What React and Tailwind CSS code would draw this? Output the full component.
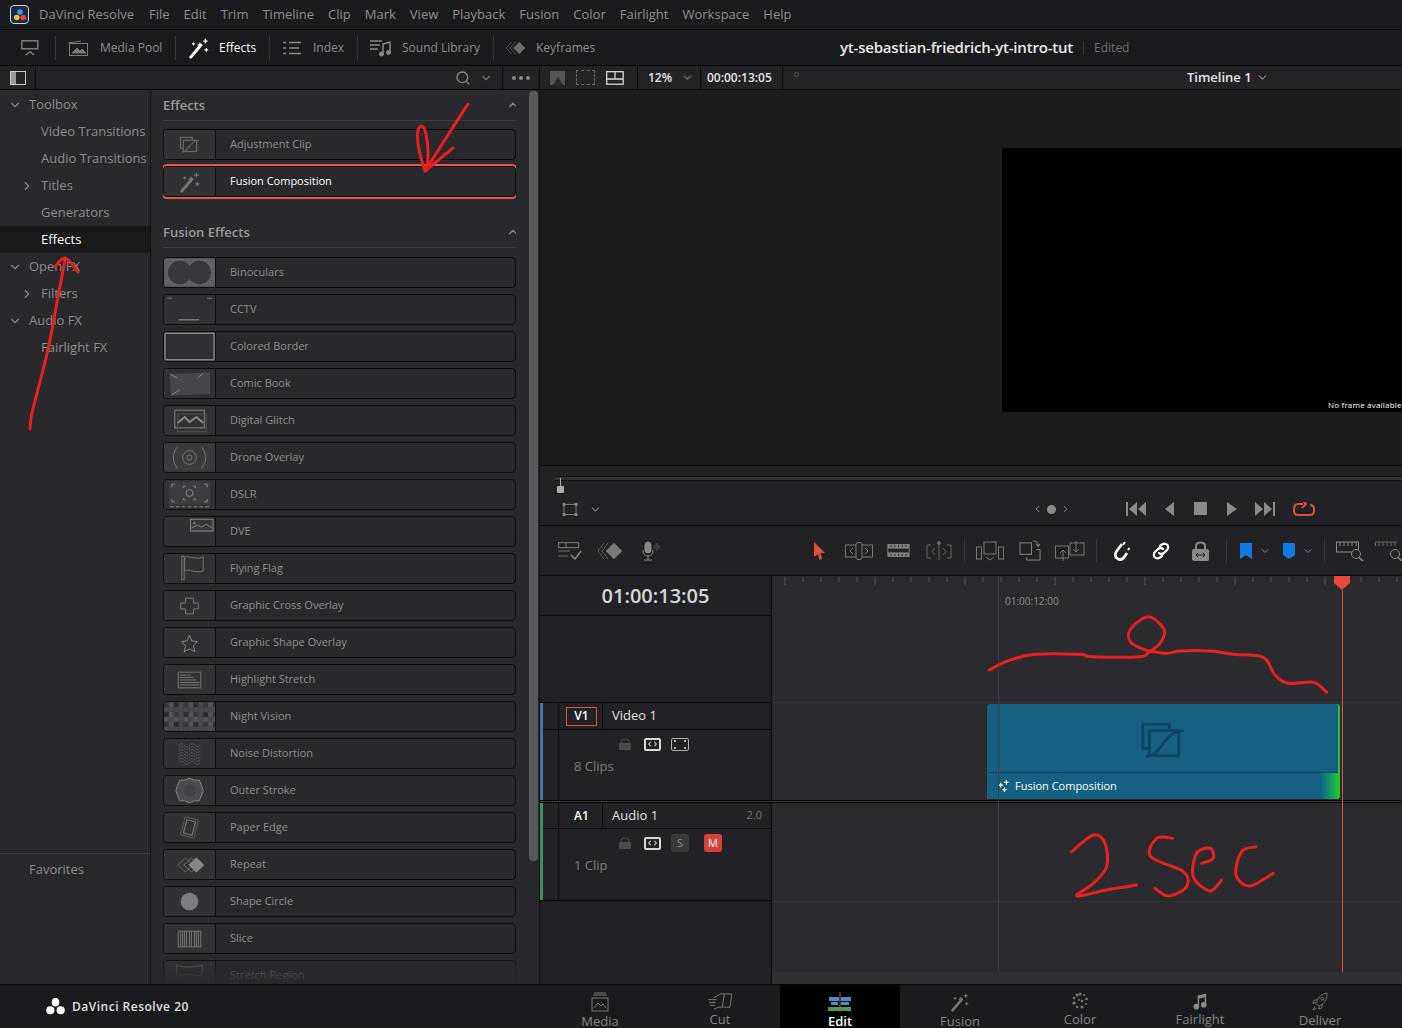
import { ChevronDown, ChevronRight, ChevronUp, ChevronLeft, Search } from 'lucide-react';

const menuItems = ['File', 'Edit', 'Trim', 'Timeline', 'Clip', 'Mark', 'View', 'Playback', 'Fusion', 'Color', 'Fairlight', 'Workspace', 'Help'];

const smooth = (pts) => {
  let d = `M${pts[0][0]} ${pts[0][1]}`;
  for (let i = 0; i < pts.length - 1; i++) {
    const p0 = pts[i - 1] || pts[i];
    const p1 = pts[i];
    const p2 = pts[i + 1];
    const p3 = pts[i + 2] || p2;
    d += ` C${p1[0] + (p2[0] - p0[0]) / 6} ${p1[1] + (p2[1] - p0[1]) / 6} ${p2[0] - (p3[0] - p1[0]) / 6} ${p2[1] - (p3[1] - p1[1]) / 6} ${p2[0]} ${p2[1]}`;
  }
  return d;
};

function Wand({ className, color = '#fff' }) {
  return (
    <svg viewBox="0 0 24 24" className={className} fill="none" stroke={color}>
      <path d="M3 22 L14 9" strokeWidth="3.2" strokeLinecap="round" />
      <path d="M13 6 V11 M10.5 8.5 H15.5 M19 2 V7 M16.5 4.5 H21.5 M20 12 V16 M18 14 H22 M6 6 V9 M4.500 7.500 H7.500" strokeWidth="1.3" />
    </svg>
  );
}

function AdjustIcon({ color = '#777', className }) {
  return (
    <svg viewBox="0 0 22 18" className={className} fill="none" stroke={color} strokeWidth="1.300">
      <path d="M5 13 H1.500 V1.500 H14 V4" />
      <rect x="4.500" y="4.500" width="14" height="12" />
      <path d="M3 17 C10 17 11 5 21 4.500" />
    </svg>
  );
}

function Logo({ className, fill = '#fff' }) {
  return (
    <svg viewBox="0 0 20 18" className={className} fill={fill}>
      <ellipse cx="10" cy="4.500" rx="4" ry="4.500" />
      <circle cx="4.500" cy="13" r="4.300" />
      <circle cx="15.500" cy="13" r="4.300" />
    </svg>
  );
}

const s = '#8a8a8a';
const thumbs = {
  Binoculars: (
    <>
      <rect width="52" height="29" fill="#5e6064" />
      <circle cx="16" cy="14.500" r="12" fill="#37383c" />
      <circle cx="36" cy="14.500" r="12" fill="#37383c" />
    </>
  ),
  CCTV: (
    <>
      <path d="M3 3 H8 M44 3 H49" stroke="#777" />
      <path d="M15 25 H36" stroke="#777" strokeWidth="1.500" />
    </>
  ),
  'Colored Border': <rect x="1" y="1" width="50" height="27" fill="#303034" stroke="#85868a" strokeWidth="1.500" />,
  'Comic Book': (
    <>
      <path d="M6 5 L47 3 V25 L7 27 Z" fill="#46474b" />
      <path d="M6 5 L14 9 M34 9 L40 4 M8 26 L16 21" stroke="#888" />
    </>
  ),
  'Digital Glitch': (
    <g fill="none" stroke={s}>
      <rect x="11" y="4" width="30" height="18" />
      <rect x="14" y="8" width="29" height="18" stroke="#555" />
      <path d="M14 17 L21 11 L26 16 L33 11 L40 17" strokeWidth="2" />
    </g>
  ),
  'Drone Overlay': (
    <g fill="none" stroke="#777">
      <rect width="52" height="29" fill="#3a3b3f" stroke="none" />
      <circle cx="26" cy="14.500" r="7" />
      <circle cx="26" cy="14.500" r="2.500" />
      <path d="M14 3 C8 11 8 18 14 26 M38 3 C44 11 44 18 38 26" />
    </g>
  ),
  DSLR: (
    <g fill="none" stroke="#888">
      <rect x="5" y="1" width="42" height="24" fill="#3c3d41" stroke="none" />
      <path d="M8 7 V4 H11 M41 4 H44 V7 M8 19 V22 H11 M41 22 H44 V19" />
      <circle cx="26" cy="13" r="3.500" />
      <path d="M20 8 V6 H22 M30 6 H32 V8 M20 18 V20 H22 M30 20 H32 V18" />
      <path d="M6 27 H46" strokeDasharray="4 2" />
    </g>
  ),
  DVE: (
    <g fill="none" stroke="#888">
      <rect x="27" y="2" width="23" height="12" fill="#36373b" />
      <path d="M28 11 L34 8 L38 10 L43 7 L49 11" />
      <circle cx="31" cy="6" r="0.800" fill="#888" />
    </g>
  ),
  'Flying Flag': (
    <g fill="none" stroke="#777">
      <rect x="18" y="2" width="2.500" height="24" />
      <path d="M21 3 C26 1 30 6 40 3 V17 C30 20 26 14 21 17 Z" />
    </g>
  ),
  'Graphic Cross Overlay': <path d="M22 7 H30 V12 H35 Q35 12 35 18 H30 V23 H22 V18 H17 V12 H22 Z" fill="none" stroke="#777" />,
  'Graphic Shape Overlay': <path d="M26 7 L28.500 13 L34 13.500 L30 18 L31.500 24 L26 21 L20.500 24 L22 18 L18 13.500 L23.500 13 Z" fill="none" stroke="#888" />,
  'Highlight Stretch': (
    <g fill="none" stroke="#777">
      <rect x="14.500" y="7" width="23" height="16" />
      <path d="M16 10 H27 M16 12.500 H30 M16 15 H33 M16 17.500 H36 M16 20 H36" />
    </g>
  ),
  'Noise Distortion': (
    <g fill="none" stroke="#6f6f6f" strokeDasharray="1 1">
      {[6, 9, 12, 15, 18, 21, 24].map((y) => (
        <path key={y} d={`M15 ${y} q3 -3 5.500 0 t5.500 0 t5.500 0 t5.500 0`} />
      ))}
    </g>
  ),
  'Outer Stroke': (
    <>
      <path d="M26 2 L31 4 L36 4 L38 9 L40 14.500 L38 20 L36 25 L31 25 L26 27 L21 25 L16 25 L14 20 L12 14.500 L14 9 L16 4 L21 4 Z" fill="#4b4c50" stroke="#888" />
      <circle cx="26" cy="14.500" r="6" fill="#424347" />
    </>
  ),
  'Paper Edge': (
    <g fill="none" stroke="#5c5c5c" transform="rotate(15 26 14.500)">
      <rect x="19" y="5" width="14" height="19" rx="1" />
      <rect x="21.500" y="7.500" width="9" height="14" stroke="#858585" />
    </g>
  ),
  Repeat: (
    <g>
      <path d="M14 15 L22 8 L30 15 L22 22 Z" fill="none" stroke="#666" />
      <path d="M20 15 L28 8 L36 15 L28 22 Z" fill="none" stroke="#777" />
      <path d="M25 15 L33 7 L41 15 L33 23 Z" fill="#888" />
    </g>
  ),
  'Shape Circle': <circle cx="26" cy="14.500" r="9" fill="#7c7d80" />,
  Slice: (
    <g stroke="#777">
      <rect x="14.500" y="7" width="23" height="16" fill="none" />
      {[17, 19, 21, 23, 26, 28, 31, 33, 35].map((x) => (
        <path key={x} d={`M${x} 7 V23`} />
      ))}
    </g>
  ),
  'Stretch Region': (
    <g fill="none" stroke="#6c6c6c">
      <path d="M13 4 Q26 8 39 4 V15 Q26 12 13 15 Z" />
      <path d="M13 21 H39 V26 H13 Z" />
    </g>
  ),
};

function NightVisionThumb() {
  const cells = [];
  for (let y = 0; y < 6; y++) {
    for (let x = 0; x < 11; x++) {
      const v = (x * 7 + y * 13 + x * y) % 4;
      cells.push(<rect key={`${x}-${y}`} x={x * 5} y={y * 5} width="5" height="5" fill={['#3a3a3e', '#48494d', '#2f2f33', '#535458'][v]} />);
    }
  }
  return <>{cells}</>;
}

function EffectRow({ name, active }) {
  return (
    <div className={`flex h-[31px] rounded-[4px] border border-[#0d0d0f] ${active ? 'outline-2 outline-[#e8534a]' : ''}`}>
      <div className="w-[52px] shrink-0 overflow-hidden rounded-l-[3px] bg-[#303135] border-r border-[#0d0d0f] flex items-center justify-center">
        {name === 'Adjustment Clip' ? (
          <AdjustIcon className="w-[21px] h-[17px]" color="#666" />
        ) : name === 'Fusion Composition' ? (
          <Wand className="w-[22px] h-[22px]" color="#777" />
        ) : (
          <svg viewBox="0 0 52 29" className="w-[52px] h-[29px]">
            {name === 'Night Vision' ? <NightVisionThumb /> : thumbs[name]}
          </svg>
        )}
      </div>
      <div className={`pl-[14px] flex items-center text-[11px] ${active ? 'text-white' : 'text-[#8f8f8f]'}`}>{name}</div>
    </div>
  );
}

function SectionHead({ title, className = '' }) {
  return (
    <div className={`h-[31px] shrink-0 border-b border-[#3c3c42] flex items-center justify-between text-[13px] font-semibold text-[#9a9a9a] ${className}`}>
      <span className="pt-[2px]">{title}</span>
      <ChevronUp className="w-[14px] h-[14px] mr-[-4px] text-[#888]" />
    </div>
  );
}

function TreeItem({ label, arrow, indent, active }) {
  return (
    <div className={`h-[27px] flex items-center text-[13px] ${active ? 'bg-[#1a1a1d] text-white' : 'text-[#8d8d8d]'}`}>
      <span className={`flex justify-center ${indent ? 'w-[41px] pl-[12px]' : 'w-[29px]'}`}>
        {arrow === 'down' && <ChevronDown className="w-[14px] h-[14px] text-[#888]" />}
        {arrow === 'right' && <ChevronRight className="w-[14px] h-[14px] text-[#888]" />}
      </span>
      <span className="whitespace-nowrap">{label}</span>
    </div>
  );
}

function ToolSep({ className = '' }) {
  return <div className={`w-px h-[24px] bg-[#3a3a3d] shrink-0 ${className}`} />;
}

function TopTool({ width, icon, label, active }) {
  return (
    <div className={`flex items-center shrink-0 h-full ${width}`}>
      {icon}
      <span className={`text-[12px] ${active ? 'text-white' : 'text-[#8d8d8d]'}`}>{label}</span>
    </div>
  );
}

function Slot({ ml, children }) {
  return <div className={`shrink-0 flex items-center ${ml}`}>{children}</div>;
}

function PageTab({ label, active, children }) {
  return (
    <div className={`w-[120px] h-full flex flex-col items-center ${active ? 'bg-black' : ''}`}>
      <div className="h-[29px] pt-[7px] flex items-center justify-center">{children}</div>
      <div className={`text-[13px] leading-[18px] ${active ? 'text-white font-semibold' : 'text-[#858585]'}`}>{label}</div>
    </div>
  );
}

function Lock() {
  return (
    <svg viewBox="0 0 12 12" className="w-[12px] h-[12px]" fill="#4a4a4d">
      <rect y="5" width="12" height="7" rx="1" />
      <path d="M1.500 5 V4 A4.500 3.500 0 0 1 10.500 4 V5 H9.500 V4 A3.500 2.500 0 0 0 2.500 4 V5 Z" />
    </svg>
  );
}

function LinkBox() {
  return (
    <div className="w-[17px] h-[13px] rounded-[2px] border-2 border-[#d8d8d8] flex items-center justify-center">
      <svg viewBox="0 0 10 6" className="w-[9px] h-[6px]" fill="none" stroke="#d8d8d8" strokeWidth="1.200">
        <path d="M3 .5 L.8 3 L3 5.500 M7 .5 L9.200 3 L7 5.500" />
      </svg>
    </div>
  );
}

function TrackHead({ id, name, stripe, clips, extra, right, boxed, rowH }) {
  return (
    <div className="flex h-[97px]">
      <div className={`w-[3px] shrink-0 ${stripe}`} />
      <div className="w-[16px] shrink-0 border-r border-[#0d0d0f] flex flex-col"><div className={`border-b border-[#0d0d0f] ${rowH}`} /></div>
      <div className="flex-1 flex flex-col">
        <div className={`flex items-center border-b border-[#0d0d0f] ${rowH}`}>
          <div className="w-[44px] h-full shrink-0 flex items-center justify-end border-r border-[#0d0d0f] pr-[5px]">
            <div className={`w-[31px] h-[19px] flex items-center justify-center text-[12px] font-semibold text-white ${boxed ? 'border border-[#e0523f]' : ''}`}>{id}</div>
          </div>
          <span className="ml-[9px] text-[13px] text-[#e0e0e0]">{name}</span>
          {right && <span className="ml-auto mr-[9px] text-[11px] text-[#6f6f6f]">{right}</span>}
        </div>
        <div className="flex items-center h-[28px] pl-[60px] gap-[13px]">
          <Lock />
          <LinkBox />
          {extra}
        </div>
        <div className="pl-[15px] text-[13px] text-[#7c7c7c] leading-[18px] mt-[-1px]">{clips}</div>
      </div>
    </div>
  );
}

function Ruler() {
  const ticks = [];
  for (let i = 0; i < 35; i++) {
    const x = 13 + i * 18;
    ticks.push(<path key={i} d={`M${x} 1 V${i % 5 === 0 ? 9 : 6}`} stroke="#55565a" />);
  }
  return (
    <svg viewBox="0 0 630 14" className="w-[630px] h-[14px]">
      {ticks}
    </svg>
  );
}

const annotations = {
  arrowMain: [[468, 104], [448, 135], [425, 171]],
  arrowLeft: [[425, 170], [419, 150], [418, 130], [424, 128], [428, 150], [427, 170]],
  arrowRight: [[453, 148], [425, 171]],
  upLine: [[30, 429], [32, 413], [43, 370], [50, 340], [58, 297], [65, 260]],
  upHead: [[55, 267], [65, 258], [78, 272]],
};

const waveform = [[28, 210], [85, 182], [165, 163], [300, 163], [335, 170], [480, 170], [510, 155], [560, 160], [600, 153], [690, 153], [760, 163], [850, 172], [885, 225], [925, 250], [1000, 247], [1040, 277]];
const ringShape = [[510, 155], [455, 130], [450, 90], [505, 50], [553, 90], [540, 130], [510, 155]];
const digit = [[275, 755], [340, 705], [375, 730], [380, 800], [340, 850], [290, 888], [380, 870], [470, 855]];
const letterS = [[578, 715], [530, 715], [512, 770], [610, 815], [620, 860], [565, 888], [525, 865]];
const letterE = [[665, 790], [700, 775], [690, 745], [650, 760], [640, 830], [690, 873], [725, 840]];
const letterC = [[828, 740], [785, 755], [768, 825], [810, 858], [880, 820]];

function Scribbles() {
  return (
    <div className="absolute inset-0 pointer-events-none">
      <svg viewBox="0 0 1402 1028" className="w-[1402px] h-[1028px]" fill="none" stroke="#e8201f" strokeLinecap="round" strokeLinejoin="round">
        <g strokeWidth="3">
          {Object.values(annotations).map((pts, i) => (
            <path key={i} d={smooth(pts)} />
          ))}
        </g>
        <g transform="translate(980 600) scale(.3333)" strokeWidth="9">
          {[waveform, ringShape, digit, letterS, letterE, letterC].map((pts, i) => (
            <path key={i} d={smooth(pts)} />
          ))}
        </g>
      </svg>
    </div>
  );
}

const fusionEffects = ['Binoculars', 'CCTV', 'Colored Border', 'Comic Book', 'Digital Glitch', 'Drone Overlay', 'DSLR', 'DVE', 'Flying Flag', 'Graphic Cross Overlay', 'Graphic Shape Overlay', 'Highlight Stretch', 'Night Vision', 'Noise Distortion', 'Outer Stroke', 'Paper Edge', 'Repeat', 'Shape Circle', 'Slice', 'Stretch Region'];

export default function App() {
  return (
    <div className="relative w-[1402px] h-[1028px] overflow-hidden flex flex-col bg-[#28282d] font-['Open_Sans','Noto_Sans',sans-serif]">
      {/* menu bar */}
      <div className="h-[30px] shrink-0 bg-[#1a1b1e] border-b border-[#070708] flex items-center">
        <div className="ml-[10px] w-[19px] h-[19px] rounded-[4px] bg-[#1b2a44] border border-[#cfd3da] flex items-center justify-center">
          <svg viewBox="0 0 14 14" className="w-[14px] h-[14px]">
            <circle cx="7" cy="4" r="2.800" fill="#3aa0e8" />
            <circle cx="3.800" cy="9.500" r="2.800" fill="#f2c230" />
            <circle cx="10.200" cy="9.500" r="2.800" fill="#e8433f" />
          </svg>
        </div>
        <span className="ml-[10px] text-[13px] text-[#8e8e8e]">DaVinci Resolve</span>
        <div className="ml-[15px] flex gap-[14px] text-[13px] text-[#8e8e8e]">
          {menuItems.map((m) => (
            <span key={m}>{m}</span>
          ))}
        </div>
      </div>

      {/* tool bar */}
      <div className="h-[36px] shrink-0 bg-[#1a1b1e] border-b border-[#070708] flex items-center">
        <div className="w-[55px] h-full shrink-0 flex items-center pl-[21px]">
          <svg viewBox="0 0 18 16" className="w-[18px] h-[16px]" fill="none" stroke="#8a8a8a" strokeWidth="1.300">
            <rect x=".8" y=".8" width="16" height="8" />
            <path d="M5 15 L9 11.500 L13 15" />
          </svg>
        </div>
        <ToolSep />
        <TopTool
          width="w-[119px]"
          label="Media Pool"
          icon={
            <svg viewBox="0 0 22 16" className="w-[22px] h-[16px] ml-[11px] mr-[11px]" fill="none" stroke="#7a7a7a">
              <path d="M1 3 L14 1" />
              <rect x="2.500" y="3.500" width="18" height="12" />
              <path d="M5 13 L10 8 L13 11 L15 9 L19 13 Z" fill="#7a7a7a" />
            </svg>
          }
        />
        <ToolSep />
        <TopTool width="w-[93px]" label="Effects" active icon={<Wand className="w-[22px] h-[22px] ml-[12px] mr-[9px]" />} />
        <ToolSep />
        <TopTool
          width="w-[87px]"
          label="Index"
          icon={
            <svg viewBox="0 0 18 14" className="w-[18px] h-[14px] ml-[13px] mr-[12px]" stroke="#8a8a8a" strokeWidth="1.500">
              <path d="M0 1.500 H3 M6 1.500 H18 M0 7 H3 M6 7 H16 M0 12.500 H3 M6 12.500 H18" />
            </svg>
          }
        />
        <ToolSep />
        <TopTool
          width="w-[135px]"
          label="Sound Library"
          icon={
            <svg viewBox="0 0 22 18" className="w-[22px] h-[18px] ml-[12px] mr-[10px]" stroke="#8a8a8a" fill="none">
              <path d="M0 2 H12 M0 6 H10 M0 10 H8" strokeWidth="1.300" />
              <path d="M13 15 V5 L20 3 V13" strokeWidth="1.500" />
              <circle cx="11.500" cy="15" r="2" fill="#8a8a8a" />
              <circle cx="18.500" cy="13.500" r="2" fill="#8a8a8a" />
            </svg>
          }
        />
        <ToolSep />
        <TopTool
          width="w-[346px]"
          label="Keyframes"
          icon={
            <svg viewBox="0 0 24 14" className="w-[23px] h-[14px] ml-[11px] mr-[8px]" fill="none" stroke="#5d5d5d">
              <path d="M7 1 L1 7 L7 13 M11 1 L5 7 L11 13" />
              <path d="M15 1 L21 7 L15 13 L9 7 Z" fill="#6e6e6e" />
            </svg>
          }
        />
        <span className="text-[15px] font-semibold text-[#e9e9e9] tracking-[-0.2px] whitespace-nowrap">yt-sebastian-friedrich-yt-intro-tut</span>
        <div className="w-px h-[14px] bg-[#3a3a3d] mx-[10px]" />
        <span className="text-[12px] text-[#6f6f6f]">Edited</span>
      </div>

      {/* secondary bar */}
      <div className="h-[24px] shrink-0 bg-[#232327] border-b border-[#0b0b0d] flex items-center">
        <div className="w-[36px] h-full shrink-0 border-r border-[#0b0b0d] flex items-center pl-[10px]">
          <div className="w-[16px] h-[14px] border border-[#c8c8c8] flex">
            <div className="w-[5px] bg-[#9a9a9a]" />
          </div>
        </div>
        <div className="flex-1 max-w-[467px] flex items-center justify-end h-full border-r border-[#0b0b0d] pr-[9px]">
          <Search className="w-[16px] h-[16px] text-[#8a8a8a]" />
          <ChevronDown className="w-[14px] h-[14px] text-[#777] ml-[8px]" />
        </div>
        <div className="w-[37px] h-full shrink-0 border-r border-[#0b0b0d] flex items-center justify-center gap-[3px]">
          {[0, 1, 2].map((d) => (
            <div key={d} className="w-[4px] h-[4px] rounded-full bg-[#8a8a8a]" />
          ))}
        </div>
        <div className="w-[98px] h-full shrink-0 flex items-center border-r border-[#0b0b0d] pl-[10px] gap-[11px]">
          <div className="w-[15px] h-[14px] bg-[#555] flex items-end justify-center"><div className="w-0 h-0 border-x-[5px] border-x-transparent border-b-[8px] border-b-[#2b2b2e]" /></div>
          <div className="w-[19px] h-[15px] border border-dashed border-[#6a6a6a]" />
          <svg viewBox="0 0 18 14" className="w-[18px] h-[14px]" fill="none" stroke="#d8d8d8" strokeWidth="1.300">
            <rect x=".7" y=".7" width="16.500" height="12.500" />
            <path d="M.7 8 H17 M9 .7 V8" />
          </svg>
        </div>
        <div className="w-[63px] h-full shrink-0 border-r border-[#0b0b0d] flex items-center pl-[10px] text-[12px] font-semibold text-[#e4e4e4]">
          12%
          <ChevronDown className="w-[13px] h-[13px] text-[#777] ml-[9px]" />
        </div>
        <div className="w-[82px] h-full shrink-0 border-r border-[#0b0b0d] flex items-center pl-[6px] text-[12px] font-semibold text-[#e4e4e4]">00:00:13:05</div>
        <div className="w-[5px] h-[5px] rounded-full border border-[#555] ml-[11px] mb-[6px]" />
        <div className="ml-[388px] flex items-center text-[13px] font-semibold text-[#e4e4e4]">
          Timeline 1
          <ChevronDown className="w-[13px] h-[13px] text-[#888] ml-[4px]" />
        </div>
      </div>

      {/* main */}
      <div className="flex-1 min-h-0 flex">
        {/* sidebar */}
        <div className="w-[151px] shrink-0 border-r border-[#111114] flex flex-col pt-px">
          <TreeItem label="Toolbox" arrow="down" />
          <TreeItem label="Video Transitions" indent />
          <TreeItem label="Audio Transitions" indent />
          <TreeItem label="Titles" arrow="right" indent />
          <TreeItem label="Generators" indent />
          <TreeItem label="Effects" indent active />
          <TreeItem label="Open FX" arrow="down" />
          <TreeItem label="Filters" arrow="right" indent />
          <TreeItem label="Audio FX" arrow="down" />
          <TreeItem label="Fairlight FX" indent />
          <div className="mt-auto mb-[99px] h-[32px] border-t border-[#3c3c42] flex items-center pl-[29px] text-[13px] text-[#8d8d8d]">Favorites</div>
        </div>

        {/* effects list */}
        <div className="w-[389px] shrink-0 border-r border-[#111114] flex relative">
          <div className="w-[353px] ml-[12px] flex flex-col overflow-hidden">
            <SectionHead title="Effects" />
            <div className="flex flex-col gap-[6px] mt-[8px]">
              <EffectRow name="Adjustment Clip" />
              <EffectRow name="Fusion Composition" active />
            </div>
            <SectionHead title="Fusion Effects" className="mt-[20px]" />
            <div className="flex flex-col gap-[6px] mt-[9px]">
              {fusionEffects.map((f) => (
                <EffectRow key={f} name={f} />
              ))}
            </div>
          </div>
          <div className="w-[9px] h-[770px] mt-px ml-[13px] rounded-[4px] bg-[#56585b]" />
          <div className="absolute left-0 right-[10px] bottom-0 h-[30px] bg-gradient-to-b from-transparent to-[#28282d]" />
        </div>

        {/* viewer + timeline */}
        <div className="flex-1 min-w-0 flex flex-col">
          <div className="h-[375px] shrink-0 bg-[#1c1c1f] pt-[58px] flex justify-end">
            <div className="w-[400px] h-[264px] bg-black flex items-end overflow-hidden">
              <span className="ml-[326px] mb-[2px] text-[8px] leading-[11px] text-white whitespace-nowrap tracking-[.2px]">No frame available</span>
            </div>
          </div>

          {/* transport */}
          <div className="h-[61px] shrink-0 bg-[#222226] border-y border-[#0b0b0d] flex flex-col relative">
            <div className="mt-[10px] ml-[15px] h-[5px] bg-[#323236] border-y border-[#111]" />
            <div className="absolute left-[17px] top-[12px] w-[6px] h-[15px] flex flex-col items-center">
              <div className="w-px h-[8px] bg-[#aaa]" />
              <div className="w-[7px] h-[7px] rounded-[1px] bg-[#aaa]" />
            </div>
            <div className="flex items-center mt-[21px] h-[14px]">
              <svg viewBox="0 0 16 14" className="w-[16px] h-[13px] ml-[22px]" fill="none" stroke="#888">
                <rect x="1.500" y="1.500" width="13" height="11" />
                <g fill="#888" stroke="none">
                  <rect width="3" height="3" />
                  <rect x="13" width="3" height="3" />
                  <rect y="11" width="3" height="3" />
                  <rect x="13" y="11" width="3" height="3" />
                </g>
              </svg>
              <ChevronDown className="w-[13px] h-[13px] text-[#777] ml-[11px]" />
              <ChevronLeft className="w-[11px] h-[12px] text-[#8a8a8a] ml-[430px]" />
              <div className="w-[9px] h-[9px] rounded-full bg-[#8a8a8a] ml-[4px]" />
              <ChevronRight className="w-[11px] h-[12px] text-[#8a8a8a] ml-[4px]" />
              <svg viewBox="0 0 190 14" className="w-[190px] h-[14px] ml-[55px]" fill="#8a8a8a">
                <path d="M0 0 H2 V14 H0 Z M11 0 V14 L3 7 Z M20 0 V14 L12 7 Z" />
                <path d="M48 0 V14 L39 7 Z" />
                <rect x="68" width="13" height="13" />
                <path d="M101 0 L111 7 L101 14 Z" />
                <path d="M129 0 L137 7 L129 14 Z M138 0 L146 7 L138 14 Z M147 0 H149 V14 H147 Z" />
                <g fill="none" stroke="#e0503f" strokeWidth="2">
                  <path d="M177 2 H172 Q168 2 168 7 V9 Q168 13 172 13 H184 Q188 13 188 9 V7 Q188 3 184 3" />
                  <path d="M176 -2 L180 2 L176 6" />
                </g>
              </svg>
            </div>
          </div>

          {/* timeline tools */}
          <div className="h-[50px] shrink-0 bg-[#222226] border-b border-[#0b0b0d] flex items-center overflow-hidden">
            <Slot ml="ml-[18px]">
              <svg viewBox="0 0 24 18" className="w-[24px] h-[18px]" fill="none" stroke="#6f6f6f" strokeWidth="1.200">
                <rect x=".6" y=".6" width="20" height="5" />
                <path d="M8 .6 V5.600 M0 9 H12 M0 14 H10" />
                <path d="M13 13 L17 17 L23 9" stroke="#8a8a8a" strokeWidth="1.500" />
              </svg>
            </Slot>
            <Slot ml="ml-[15px]">
              <svg viewBox="0 0 26 18" className="w-[26px] h-[18px]" fill="none" stroke="#5f5f5f">
                <path d="M7 1 L1 9 L7 17 M11 1 L5 9 L11 17" />
                <path d="M17 1 L25 9 L17 17 L9 9 Z" fill="#7a7a7a" />
              </svg>
            </Slot>
            <Slot ml="ml-[18px]">
              <svg viewBox="0 0 20 20" className="w-[20px] h-[20px]" fill="none" stroke="#888">
                <rect x="4" y="1" width="6" height="11" rx="3" fill="#888" />
                <path d="M2 9 Q2 15 7 15 Q12 15 12 9 M7 15 V19 M3 19 H11" />
                <path d="M14 4 V8 M16 2 V10 M18 4 V8" stroke="#555" />
              </svg>
            </Slot>
            <Slot ml="ml-[152px]">
              <svg viewBox="0 0 12 18" className="w-[12px] h-[18px]" fill="#e0503f">
                <path d="M1 0 L12 11 L7.500 11 L9 17 L6.500 18 L5 12 L1 15 Z" />
              </svg>
            </Slot>
            <Slot ml="ml-[20px]">
              <svg viewBox="0 0 28 18" className="w-[28px] h-[18px]" fill="none" stroke="#7a7a7a">
                <rect x=".5" y="3" width="27" height="12" />
                <rect x="11" y=".5" width="6" height="17" rx="2" fill="#222226" />
                <path d="M8 6 L5 9 L8 12 M20 6 L23 9 L20 12" />
              </svg>
            </Slot>
            <Slot ml="ml-[14px]">
              <svg viewBox="0 0 24 14" className="w-[23px] h-[13px]" fill="#7f7f7f">
                <rect width="24" height="14" />
                <path d="M1 5 H23 V9 H1 Z" fill="#222226" />
                <path d="M4 1 V3 M8 1 V3 M12 1 V3 M16 1 V3 M20 1 V3 M4 11 V13 M8 11 V13 M12 11 V13 M16 11 V13 M20 11 V13" stroke="#222226" />
              </svg>
            </Slot>
            <Slot ml="ml-[16px]">
              <svg viewBox="0 0 26 20" className="w-[26px] h-[20px]" fill="none" stroke="#666">
                <path d="M13 3 V19 M5 4 H1 V17 H5 M21 4 H25 V17 H21 M9 7 L6 10.500 L9 14 M17 7 L20 10.500 L17 14" />
                <circle cx="13" cy="2" r="1.500" fill="#666" />
              </svg>
            </Slot>
            <ToolSep className="ml-[12px]" />
            <Slot ml="ml-[11px]">
              <svg viewBox="0 0 28 20" className="w-[28px] h-[20px]" fill="none" stroke="#777">
                <rect x="8" y="1" width="12" height="12" />
                <rect x=".5" y="6" width="5" height="12" />
                <rect x="22.500" y="6" width="5" height="12" />
                <path d="M10 16 L14 19 L18 16" />
              </svg>
            </Slot>
            <Slot ml="ml-[15px]">
              <svg viewBox="0 0 24 22" className="w-[23px] h-[21px]" fill="none" stroke="#8a8a8a">
                <rect x="1" y="3" width="12" height="12" />
                <path d="M8 18 V21 H22 V10 H18 M15 1 Q20 1 20 6 M18 4 L20 7 L22 4" />
              </svg>
            </Slot>
            <Slot ml="ml-[13px]">
              <svg viewBox="0 0 30 22" className="w-[30px] h-[22px]" fill="none" stroke="#777">
                <rect x=".5" y="6" width="13" height="12" />
                <rect x="15" y="3" width="14" height="12" />
                <path d="M8 21 V10 M5 13 L8 10 L11 13 M21 1 V12 M18 9 L21 12 L24 9" />
              </svg>
            </Slot>
            <ToolSep className="ml-[11px]" />
            <Slot ml="ml-[15px]">
              <svg viewBox="0 0 20 22" className="w-[20px] h-[22px]" fill="none" stroke="#fff" strokeWidth="2.600">
                <path d="M10 4 L4 12 Q2 17 6 19 Q10 21 13 16 L15 13" />
                <path d="M13 2 L11 5 M17.500 8 L16 10" strokeWidth="2" />
              </svg>
            </Slot>
            <Slot ml="ml-[20px]">
              <svg viewBox="0 0 18 18" className="w-[18px] h-[18px]" fill="none" stroke="#fff" strokeWidth="2.200" strokeLinecap="round">
                <path d="M8 4 L10 2.500 Q13 0.500 15.500 3 Q17 6 15 8 L12 11 Q9 13 7 11" />
                <path d="M10 14 L8 15.500 Q5 17.500 2.500 15 Q1 12 3 10 L6 7 Q9 5 11 7" />
              </svg>
            </Slot>
            <Slot ml="ml-[22px]">
              <svg viewBox="0 0 17 20" className="w-[17px] h-[20px]">
                <path d="M4 9 V5 Q4 1.500 8.500 1.500 Q13 1.500 13 5 V9" fill="none" stroke="#8a8a8a" strokeWidth="2" />
                <rect y="8" width="17" height="12" rx="2" fill="#8a8a8a" />
                <path d="M4 14 H13 M6 12 L4 14 L6 16 M11 12 L13 14 L11 16" stroke="#222226" fill="none" />
              </svg>
            </Slot>
            <ToolSep className="ml-[17px]" />
            <Slot ml="ml-[13px]">
              <svg viewBox="0 0 12 16" className="w-[12px] h-[16px]" fill="#1479e0">
                <path d="M0 0 H12 V16 L6 12 L0 16 Z" />
              </svg>
              <ChevronDown className="w-[12px] h-[12px] text-[#888] ml-[7px]" />
            </Slot>
            <Slot ml="ml-[12px]">
              <svg viewBox="0 0 12 16" className="w-[12px] h-[16px]" fill="#1479e0">
                <path d="M0 1 Q0 0 1 0 H11 Q12 0 12 1 V12 L6 16 L0 12 Z" />
              </svg>
              <ChevronDown className="w-[12px] h-[12px] text-[#888] ml-[7px]" />
            </Slot>
            <ToolSep className="ml-[10px]" />
            <Slot ml="ml-[11px]">
              <svg viewBox="0 0 28 20" className="w-[28px] h-[20px]" fill="none" stroke="#8a8a8a">
                <rect x=".5" y="1" width="22" height="10" />
                <path d="M4 1 V5 M8 1 V5 M12 1 V5 M16 1 V5 M20 1 V5" />
                <circle cx="20" cy="13" r="4.500" fill="#222226" />
                <path d="M23 16.500 L27 20" strokeWidth="1.500" />
              </svg>
            </Slot>
            <Slot ml="ml-[11px]">
              <svg viewBox="0 0 28 20" className="w-[28px] h-[20px]" fill="none" stroke="#666">
                <path d="M.5 1 V5 M4 1 V5 M8 1 V5 M12 1 V5 M16 1 V5 M20 1 V5 M.5 1 H22" />
                <circle cx="20" cy="13" r="4.500" stroke="#8a8a8a" />
                <path d="M23 16.500 L27 20" strokeWidth="1.500" stroke="#8a8a8a" />
              </svg>
            </Slot>
          </div>

          {/* timeline */}
          <div className="flex-1 min-h-0 flex relative">
            <div className="w-[232px] shrink-0 bg-[#222226] border-r border-[#0b0b0d] flex flex-col">
              <div className="h-[40px] shrink-0 border-b border-[#0b0b0d] flex items-center justify-center text-[20px] font-semibold text-[#d6d6d6]">01:00:13:05</div>
              <div className="h-[87px] shrink-0 border-b border-[#0b0b0d]" />
              <TrackHead
                id="V1"
                name="Video 1"
                stripe="bg-[#3f78a8]"
                clips="8 Clips"
                boxed
                rowH="h-[27px]"
                extra={
                  <div className="w-[18px] h-[13px] ml-[-3px] rounded-[2px] border border-[#aaa] flex flex-col justify-between px-[2px] py-[1px]">
                    <div className="h-[2px] border-x-2 border-[#aaa]" />
                    <div className="h-[2px] border-x-2 border-[#aaa]" />
                  </div>
                }
              />
              <div className="h-[3px] shrink-0 bg-[#3c3c3f] border-y border-[#070708]" />
              <TrackHead
                id="A1"
                name="Audio 1"
                stripe="bg-[#3f8f5f]"
                clips="1 Clip"
                right="2.0"
                rowH="h-[26px]"
                extra={
                  <>
                    <div className="w-[18px] h-[18px] ml-[-3px] rounded-[3px] bg-[#3a3a3d] flex items-center justify-center text-[11px] text-[#8a8a8a]">S</div>
                    <div className="w-[18px] h-[18px] ml-[2px] rounded-[3px] bg-[#d9423a] flex items-center justify-center text-[11px] text-white">M</div>
                  </>
                }
              />
              <div className="border-t border-[#0b0b0d]" />
            </div>

            <div className="flex-1 min-w-0 bg-[#2a2a2f] flex flex-col relative overflow-hidden">
              <div className="h-[40px] shrink-0 relative">
                <Ruler />
                <span className="block pl-[233px] mt-[5px] text-[10px] leading-[12px] text-[#8e8e8e]">01:00:12:00</span>
              </div>
              <div className="h-[87px] shrink-0 border-b border-[#333338]" />
              <div className="h-[97px] shrink-0 pt-px">
                <div className="ml-[215px] w-[353px] h-[95px] rounded-[3px] bg-[#166082] border-r-2 border-[#25c42c] flex flex-col">
                  <div className="h-[69px] shrink-0 border-b border-[#0f4560] flex items-center justify-center pt-[3px]">
                    <AdjustIcon className="w-[50px] h-[38px]" color="#0e4561" />
                  </div>
                  <div className="flex-1 flex items-center pl-[10px] bg-gradient-to-r from-[#166082] from-[95%] to-[#25c42c]">
                    <svg viewBox="0 0 14 14" className="w-[13px] h-[13px] mr-[5px]" stroke="#fff" strokeWidth="1.200">
                      <path d="M4 3 V8 M1.500 5.500 H6.500 M10 0 V5 M7.500 2.500 H12.500 M8 8 V13 M5.500 10.500 H10.500" />
                    </svg>
                    <span className="text-[11px] text-white">Fusion Composition</span>
                  </div>
                </div>
              </div>
              <div className="h-[3px] shrink-0 bg-[#3c3c3f] border-y border-[#070708]" />
              <div className="h-[99px] shrink-0 border-b border-[#333338]" />
              <div className="flex-1" />
              <div className="h-[12px] shrink-0 bg-[#2f2f34]" />
              {/* grid line */}
              <div className="absolute left-[226px] top-0 bottom-[12px] w-px bg-[#3c3c41]" />
              {/* playhead */}
              <div className="absolute left-[562px] top-0 bottom-[12px] w-[16px] flex flex-col items-center">
                <svg viewBox="0 0 16 14" className="w-[16px] h-[14px] shrink-0" fill="#e8483c">
                  <path d="M0 0 H16 V7 L8 14 L0 7 Z" />
                </svg>
                <div className="w-px flex-1 bg-[#e0503f]" />
              </div>
            </div>
          </div>
        </div>
      </div>

      {/* page bar */}
      <div className="h-[44px] shrink-0 bg-[#1a1b1e] border-t border-[#070708] flex items-center overflow-hidden">
        <div className="w-[540px] shrink-0 flex items-center pl-[46px]">
          <Logo className="w-[19px] h-[17px]" />
          <span className="ml-[7px] text-[12px] font-semibold text-[#e0e0e0] tracking-[.5px]">DaVinci Resolve 20</span>
        </div>
        <div className="flex h-full">
          <PageTab label="Media">
            <svg viewBox="0 0 18 20" className="w-[18px] h-[20px]" fill="none" stroke="#777">
              <path d="M3 1 H15 M2 3 H16" />
              <rect x="1" y="6" width="16" height="13" />
              <path d="M3 16 L7 11 L10 14 L12 12 L15 16" />
            </svg>
          </PageTab>
          <PageTab label="Cut">
            <svg viewBox="0 0 26 18" className="w-[25px] h-[17px]" fill="none" stroke="#7c7c7c">
              <path d="M6 5 L13 1 H25 L23 15 H11 L6 17 M0 7 H9 M1 10 H8 M2 13 H7 M17 1 L15 15" />
            </svg>
          </PageTab>
          <PageTab label="Edit" active>
            <svg viewBox="0 0 24 20" className="w-[24px] h-[20px]">
              <rect x="1" y="5" width="10" height="4" fill="#4a8fd0" />
              <rect x="13" y="5" width="10" height="4" fill="#4a8fd0" />
              <rect x="3" y="10" width="7" height="3" fill="#4a8fd0" />
              <rect x="13" y="10" width="8" height="3" fill="#4a8fd0" />
              <rect x="0" y="15" width="23" height="4" fill="#4a9a5a" />
              <rect x="11.500" y="0" width="1" height="20" fill="#e0503f" />
            </svg>
          </PageTab>
          <PageTab label="Fusion">
            <Wand className="w-[20px] h-[20px]" color="#777" />
          </PageTab>
          <PageTab label="Color">
            <svg viewBox="0 0 18 18" className="w-[18px] h-[18px]" fill="#7c7c7c">
              {[[9, 2, 1.500], [13, 3, 1], [15.500, 7, 1.300], [15, 12, 1], [11, 15, 1.500], [6, 15, 1.200], [3, 11, 1.600], [3, 6, 1.300], [6, 3, 1.500], [8, 8, 1], [11, 9, 1.300]].map(([cx, cy, r], i) => (
                <circle key={i} cx={cx} cy={cy} r={r} />
              ))}
            </svg>
          </PageTab>
          <PageTab label="Fairlight">
            <svg viewBox="0 0 16 18" className="w-[15px] h-[18px]" fill="#8a8a8a">
              <path d="M5 3 L14 1 V13 H12.500 V5 L6.500 6.500 V15 H5 Z" />
              <circle cx="3.500" cy="15" r="3" />
              <circle cx="11.500" cy="13" r="3" />
            </svg>
          </PageTab>
          <PageTab label="Deliver">
            <svg viewBox="0 0 18 20" className="w-[17px] h-[19px]" fill="none" stroke="#777">
              <path d="M16 1 Q9 2 6 8 L4 12 L7 15 L11 13 Q16 9 16 1 Z" />
              <circle cx="11" cy="7" r="1.500" />
              <path d="M5 8 L2 9 L1 12 L4 11 M11 13 L10 17 L7 18 L8 15 M3 15 L1 19 L5 17" />
            </svg>
          </PageTab>
        </div>
      </div>

      <Scribbles />
    </div>
  );
}
